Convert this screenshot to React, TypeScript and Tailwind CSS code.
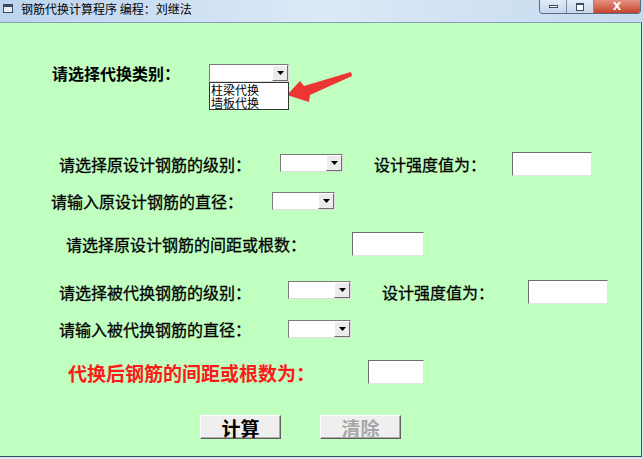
import React from "react";

function Combo({ w, children }: { w: string; children?: React.ReactNode }) {
  return (
    <div className={`relative ${w} h-[18px] bg-white border border-t-[#7a7a7a] border-l-[#7a7a7a] border-r-[#dcdcdc] border-b-[#dcdcdc] flex justify-end`}>
      <div className="w-[16px] h-[16px] bg-[#ececec] border border-t-white border-l-white border-r-[#6d6d6d] border-b-[#6d6d6d] flex items-center justify-center">
        <svg width="7" height="4" viewBox="0 0 7 4">
          <path d="M0 0h7L3.5 4z" fill="#000" />
        </svg>
      </div>
      {children}
    </div>
  );
}

function TextBox({ w }: { w: string }) {
  return (
    <div className={`${w} h-[24px] bg-white border border-t-[#6e6e6e] border-l-[#6e6e6e] border-r-[#e4e4e4] border-b-[#e4e4e4]`} />
  );
}

function Btn({ label, disabled }: { label: string; disabled?: boolean }) {
  return (
    <div className="w-[81px] h-[24px] bg-[#efefef] border border-t-white border-l-white border-r-[#5f5f5f] border-b-[#5f5f5f] shadow-[inset_-1px_-1px_0_#a8a8a8] flex items-center justify-center">
      <span className={`text-[19px] font-bold leading-none ${disabled ? "text-[#a6a6a6]" : "text-black"}`}>{label}</span>
    </div>
  );
}

export default function App() {
  return (
    <div className="relative w-[643px] h-[459px] overflow-hidden bg-[#d5e4f4] flex flex-col font-['Noto_Sans_CJK_SC',sans-serif] text-black">
      {/* Title bar */}
      <div className="h-[22px] flex items-start bg-gradient-to-r from-[#bcd4ee] via-[#dce9f7] to-[#c5d9ef]">
        <div className="mt-[4px] ml-[3px] w-[10px] h-[9px] border border-[#3a4a5c] bg-[#e8eef5] relative">
          <div className="h-[2px] bg-[#3a4a5c]" />
        </div>
        <div className="ml-[8px] mt-[1px] text-[12px] leading-[16px] text-black">钢筋代换计算程序 编程：刘继法</div>
        <div className="ml-auto mr-[2px] flex h-[14px] rounded-b-[4px] border border-t-0 border-[#5a6b83] overflow-hidden">
          <div className="w-[27px] bg-gradient-to-b from-[#e3ecf7] to-[#c4d5ea] flex items-center justify-center border-r border-[#7d8ea6]">
            <div className="w-[9px] h-[3px] border border-[#3b4c63] bg-white" />
          </div>
          <div className="w-[27px] bg-gradient-to-b from-[#e3ecf7] to-[#c4d5ea] flex items-center justify-center border-r border-[#7d8ea6]">
            <div className="w-[8px] h-[8px] border border-[#3b4c63] border-t-2 bg-white" />
          </div>
          <div className="w-[46px] bg-gradient-to-b from-[#e2917f] to-[#c4412d] flex items-center justify-center">
            <span className="text-white text-[11px] font-bold leading-none font-['DejaVu_Sans',sans-serif]">X</span>
          </div>
        </div>
      </div>

      {/* Body */}
      <div className="flex">
        <div className="w-[642px] h-[435px] bg-[#c0ffc0] border-t border-r border-b border-t-[#8aa0ba] border-r-[#4a5563] border-b-[#3f4752] flex flex-col text-[16px] leading-none [-webkit-text-stroke:0.3px_#000]">
          {/* Row 1 */}
          <div className="mt-[41px] h-[18px] flex items-center">
            <div className="ml-[52px] w-[157px] font-bold [-webkit-text-stroke:0px]">请选择代换类别：</div>
            <Combo w="w-[80px]">
              <div className="absolute left-[-1px] top-[17px] w-[80px] h-[28px] bg-white border border-[#333] z-10 px-[1px] text-[12px] leading-[13px] [-webkit-text-stroke:0px]">
                <div>柱梁代换</div>
                <div>墙板代换</div>
              </div>
            </Combo>
          </div>

          {/* Row 2 */}
          <div className="mt-[70px] h-[24px] flex items-center">
            <div className="ml-[59px] w-[221px]">请选择原设计钢筋的级别：</div>
            <div className="self-start mt-[2px]"><Combo w="w-[63px]" /></div>
            <div className="ml-[31px] w-[138px]">设计强度值为：</div>
            <TextBox w="w-[80px]" />
          </div>

          {/* Row 3 */}
          <div className="mt-[16px] h-[18px] flex items-center">
            <div className="ml-[51px] w-[221px]">请输入原设计钢筋的直径：</div>
            <Combo w="w-[63px]" />
          </div>

          {/* Row 4 */}
          <div className="mt-[22px] h-[24px] flex items-center">
            <div className="ml-[66px] w-[286px]">请选择原设计钢筋的间距或根数：</div>
            <TextBox w="w-[72px]" />
          </div>

          {/* Row 5 */}
          <div className="mt-[24px] h-[24px] flex items-center">
            <div className="ml-[59px] w-[229px]">请选择被代换钢筋的级别：</div>
            <div className="self-start mt-[1px]"><Combo w="w-[63px]" /></div>
            <div className="ml-[31px] w-[146px]">设计强度值为：</div>
            <TextBox w="w-[80px]" />
          </div>

          {/* Row 6 */}
          <div className="mt-[16px] h-[18px] flex items-center">
            <div className="ml-[59px] w-[229px]">请输入被代换钢筋的直径：</div>
            <Combo w="w-[63px]" />
          </div>

          {/* Row 7 */}
          <div className="mt-[22px] h-[24px] flex items-center [-webkit-text-stroke:0px]">
            <div className="ml-[68px] w-[300px] text-[19px] font-bold text-[#ff1a1a]">代换后钢筋的间距或根数为：</div>
            <TextBox w="w-[56px]" />
          </div>

          {/* Buttons */}
          <div className="mt-[31px] flex [-webkit-text-stroke:0px]">
            <div className="ml-[200px]"><Btn label="计算" /></div>
            <div className="ml-[39px]"><Btn label="清除" disabled /></div>
          </div>
        </div>
      </div>

      {/* Red arrow annotation */}
      <svg className="absolute left-0 top-0 pointer-events-none" width="643" height="459">
        <polygon points="287,95 300,81 304,86 351,72 352,76 310,95 309,102" fill="#ee3535" />
      </svg>
    </div>
  );
}
